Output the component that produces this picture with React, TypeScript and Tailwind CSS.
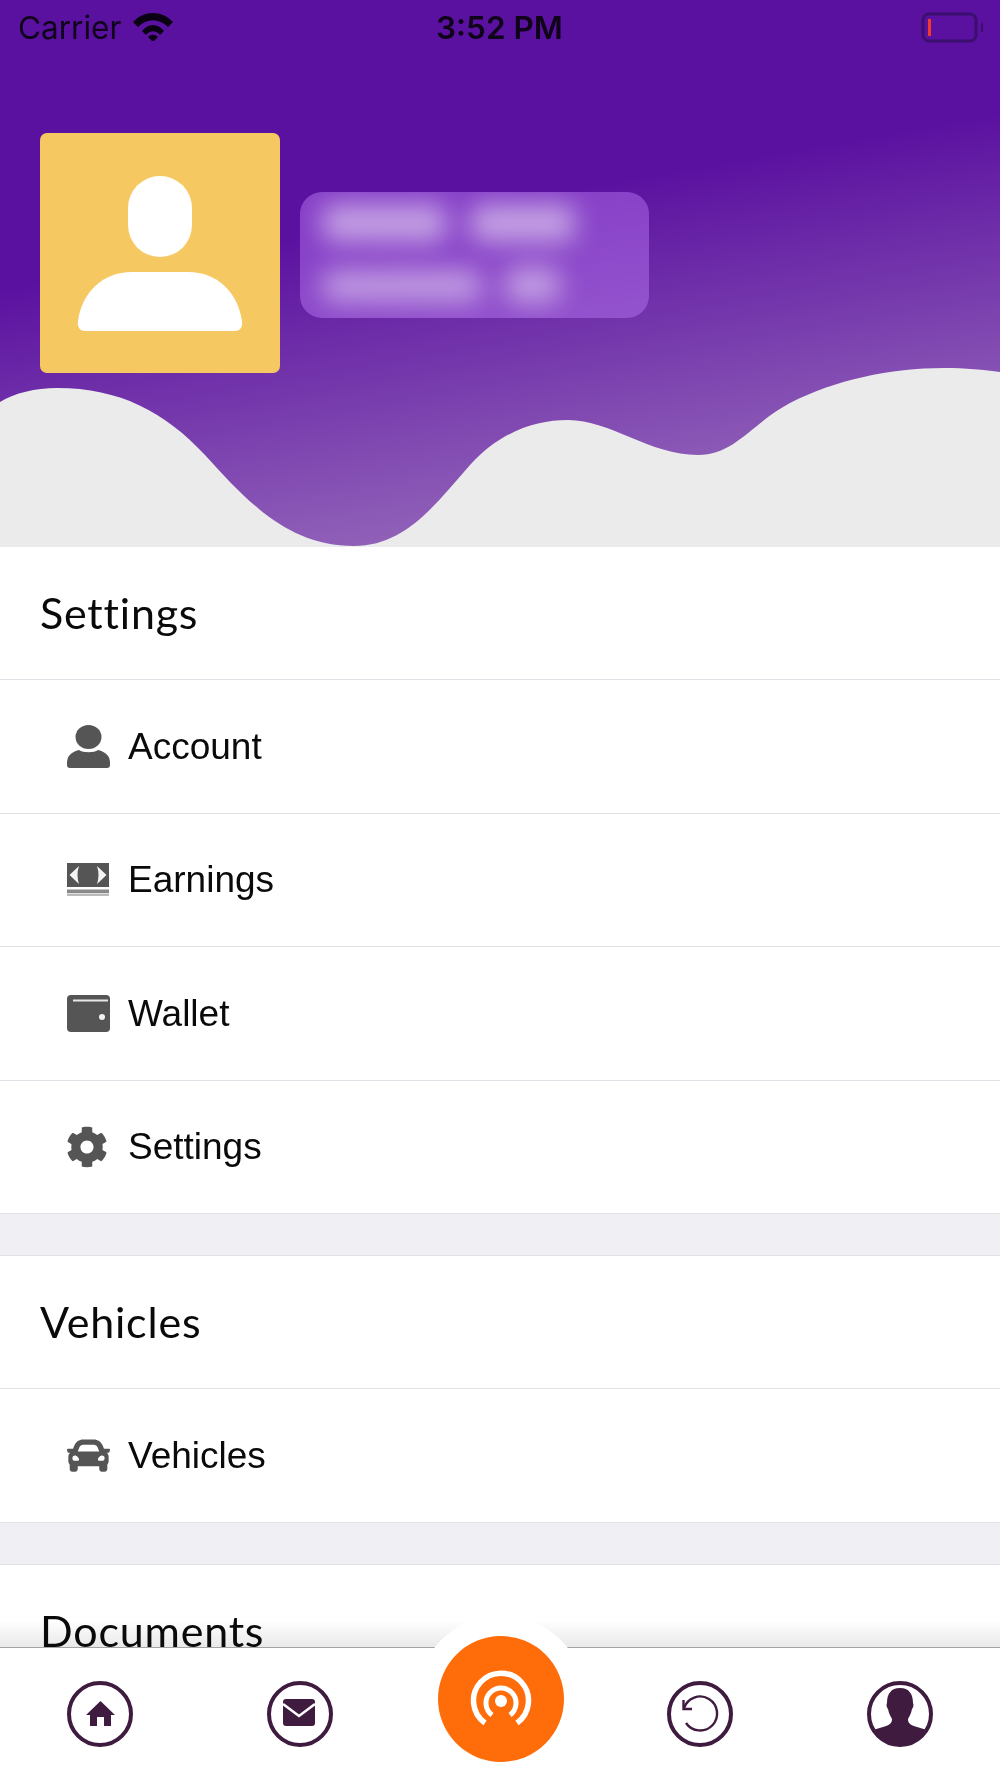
import React from "react";
import { FaCar, FaCog } from "react-icons/fa";

const UserIcon = () => (
  <svg viewBox="0 0 43 43" className="w-[43px] h-[43px]" fill="#555555">
    <ellipse cx="21.5" cy="12" rx="13" ry="12" />
    <path d="M0 38 C0 31 4 27 12 25 C16 28 27 28 31 25 C39 27 43 31 43 38 V40 Q43 43 40 43 H3 Q0 43 0 40 Z" />
  </svg>
);

const MoneyIcon = () => (
  <svg viewBox="0 0 43 34" className="w-[43px] h-[34px]">
    <rect x="0" y="0" width="42" height="24" fill="#555555" />
    <path d="M2.5 12 L12 3 Q9 12 12 21 Z" fill="#f4f4f4" />
    <path d="M39.5 12 L30 3 Q33 12 30 21 Z" fill="#f4f4f4" />
    <rect x="0" y="26.5" width="42" height="3.5" fill="#8a8a8a" />
    <rect x="0" y="30.5" width="42" height="2.5" fill="#bbbbbb" />
  </svg>
);

const WalletIcon = () => (
  <svg viewBox="0 0 43 37" className="w-[43px] h-[37px]">
    <rect x="0" y="0" width="43" height="37" rx="4" fill="#555555" />
    <rect x="6" y="4.5" width="35" height="2" fill="#e8e8e8" />
    <circle cx="35" cy="22" r="3" fill="#f2f2f2" />
  </svg>
);

const Row = ({ icon, label }: { icon: React.ReactNode; label: string }) => (
  <div className="h-[133.4px] border-b border-[#e1e1e8] bg-white flex items-center pl-[67px]">
    <div className="w-[43px] flex items-center justify-center text-[#555555] blur-[0.4px]">{icon}</div>
    <span className="ml-[18px] text-[37px] text-[#0a0a0a] font-['Liberation_Sans',sans-serif]">{label}</span>
  </div>
);

const Head = ({ label }: { label: string }) => (
  <div className="h-[133.4px] border-b border-[#e1e1e8] bg-white flex items-center pl-[40px]">
    <span className="text-[43px] tracking-[0.8px] text-[#0a0a0a] font-['Lato',sans-serif]">{label}</span>
  </div>
);

const Gap = () => <div className="h-[42px] bg-[#efeff4] border-b border-[#e1e1e8]" />;

const TabCircle = ({ children }: { children: React.ReactNode }) => (
  <svg viewBox="0 0 66 66" className="w-[66px] h-[66px]">
    {children}
    <circle cx="33" cy="33" r="31" fill="none" stroke="#3f1b3f" strokeWidth="4" />
  </svg>
);

export default function App() {
  return (
    <div className="relative w-[1000px] h-[1778px] overflow-hidden bg-white flex flex-col">
      <header className="relative h-[547px] shrink-0 overflow-hidden bg-[linear-gradient(170deg,#5b11a0_40%,#a37dc1_100%)]">
        <svg viewBox="0 0 1000 547" className="absolute inset-0 w-[1000px] h-[547px]">
          <path
            d="M0 402 C15 393 35 388 57 388 C120 388 165 412 205 455 C250 505 290 546 354 546 C405 546 435 505 470 465 C500 432 535 420 568 420 C610 420 650 455 698 455 C735 455 752 423 790 403 C835 380 890 368 944 368 C965 368 985 370 1000 372 L1000 547 L0 547 Z"
            fill="#ebebeb"
          />
        </svg>
        <div className="relative h-[56px] flex items-center justify-between px-[18px] font-['Inter',sans-serif] text-[31.5px] text-[#0e0318]">
          <div className="flex items-center gap-[12px]">
            <span>Carrier</span>
            <svg viewBox="0 0 40 30" className="w-[40px] h-[30px] mb-[4px]" fill="#0a0212">
              <path d="M0 11 C11 -1 29 -1 40 11 L35 16 C26 7 14 7 5 16 Z" />
              <path d="M9 20 C15 12 25 12 31 20 L27 24 C23 19 17 19 13 24 Z" />
              <path d="M15 26 C18 23 22 23 25 26 L20 31 Z" />
            </svg>
          </div>
          <span className="absolute left-[436px] text-[31.5px] font-semibold">3:52 PM</span>
          <svg viewBox="0 0 64 34" className="w-[64px] h-[34px] mr-[-3px]">
            <rect x="2" y="3" width="53" height="27" rx="6" fill="none" stroke="#3b0f6e" strokeWidth="3" />
            <rect x="7" y="8" width="3" height="17" fill="#f03a2a" />
            <rect x="60" y="12" width="2" height="9" fill="#3b0f6e" />
          </svg>
        </div>
        <div className="relative mt-[77px] ml-[40px] flex items-start gap-[20px]">
          <div className="w-[240px] h-[240px] rounded-[7px] bg-[#f6c861]">
            <svg viewBox="0 0 240 240" className="w-[240px] h-[240px]" fill="#ffffff">
              <rect x="88" y="43" width="64" height="81" rx="32" />
              <path d="M38 188 C42 160 62 139 92 139 H148 C178 139 198 160 202 188 C203 194 200 198 195 198 H45 C40 198 37 194 38 188 Z" />
            </svg>
          </div>
          <div className="relative mt-[59px] w-[349px] h-[126px] rounded-[22px] bg-[#bd7bf9]/45 overflow-hidden">
            <div className="absolute left-[22px] top-[12px] w-[125px] h-[38px] bg-white/50 rounded-[12px] blur-[13px]" />
            <div className="absolute left-[170px] top-[12px] w-[105px] h-[38px] bg-white/50 rounded-[12px] blur-[13px]" />
            <div className="absolute left-[22px] top-[78px] w-[160px] h-[32px] bg-white/45 rounded-[12px] blur-[13px]" />
            <div className="absolute left-[205px] top-[75px] w-[55px] h-[36px] bg-white/45 rounded-[12px] blur-[13px]" />
          </div>
        </div>
      </header>

      <main className="flex-1 overflow-hidden">
        <Head label="Settings" />
        <Row icon={<UserIcon />} label="Account" />
        <Row icon={<MoneyIcon />} label="Earnings" />
        <Row icon={<WalletIcon />} label="Wallet" />
        <Row icon={<span className="mr-[4px] block"><FaCog size={42} /></span>} label="Settings" />
        <Gap />
        <Head label="Vehicles" />
        <Row icon={<FaCar size={43} />} label="Vehicles" />
        <Gap />
        <Head label="Documents" />
      </main>

      <nav className="relative h-[131px] shrink-0 bg-white border-t-[1.5px] border-[#b4b4b4] flex items-start pt-[33px]">
        <div className="absolute left-0 right-0 bottom-full h-[28px] bg-gradient-to-b from-white to-[#e8e8e8] mix-blend-multiply" />
        <div className="absolute left-[417px] top-[-33px] w-[168px] h-[168px] rounded-full bg-white flex items-center justify-center">
          <div className="w-[126px] h-[126px] rounded-full bg-[#ff6d0b]">
            <svg viewBox="0 0 126 126" className="w-[126px] h-[126px]" fill="none" stroke="#ffffff">
              <path d="M47 87 A27.5 27.5 0 1 1 79 87" strokeWidth="5.5" />
              <path d="M54 79 A15 15 0 1 1 72 79" strokeWidth="5" />
              <circle cx="63" cy="65" r="6" fill="#ffffff" stroke="none" />
            </svg>
          </div>
        </div>
        <div className="relative w-full grid grid-cols-[200px_200px_200px_200px_200px]">
          <div className="flex justify-center">
            <TabCircle>
              <path d="M33.5 20 L48 34 H44 V45 H37 V36 H30 V45 H23 V34 H19 Z" fill="#3f1b3f" />
            </TabCircle>
          </div>
          <div className="flex justify-center">
            <TabCircle>
              <rect x="16" y="18" width="32" height="27" rx="3" fill="#3f1b3f" />
              <path d="M16 23 L32 35 L48 23" fill="none" stroke="#ffffff" strokeWidth="2.5" />
            </TabCircle>
          </div>
          <div />
          <div className="flex justify-center">
            <TabCircle>
              <path d="M17 27 A17 17 0 1 1 19 42" fill="none" stroke="#3f1b3f" strokeWidth="2.4" />
              <path d="M16.5 19 V28 H25" fill="none" stroke="#3f1b3f" strokeWidth="2.4" />
            </TabCircle>
          </div>
          <div className="flex justify-center">
            <TabCircle>
              <clipPath id="pf">
                <circle cx="33" cy="33" r="31" />
              </clipPath>
              <g clipPath="url(#pf)" fill="#3f1b3f">
                <path d="M33 7 C42 7 46 13 46 22 C47 24 46 27 45 28 C44 33 42 36 41 38 C41 42 43 44 50 46 L60 49 L62 66 H4 L6 49 L16 46 C23 44 25 42 25 38 C24 36 22 33 21 28 C20 27 19 24 20 22 C20 13 24 7 33 7 Z" />
              </g>
            </TabCircle>
          </div>
        </div>
      </nav>
    </div>
  );
}
